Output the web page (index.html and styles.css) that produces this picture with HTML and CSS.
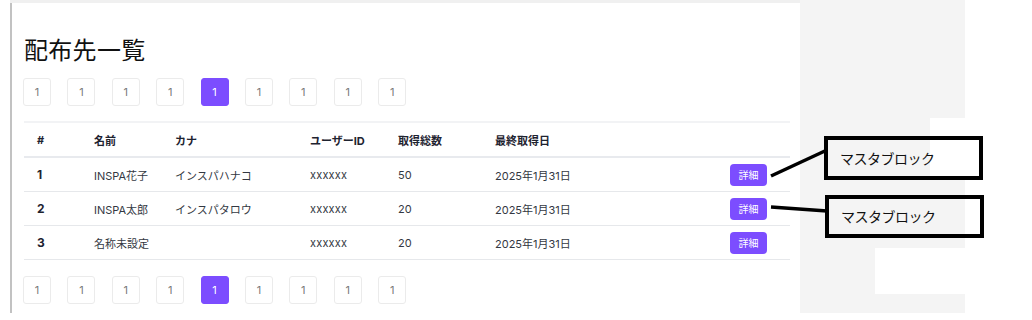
FILE: index.html
```html
<!DOCTYPE html>
<html lang="ja">
<head>
<meta charset="utf-8">
<title>配布先一覧</title>
<link rel="stylesheet" href="styles.css">
</head>
<body>
<div class="screen">
  <div class="gutter"></div>
  <main class="page">
    <h1 class="title">配布先一覧</h1>
    <nav class="pager">
      <span class="pg">1</span><span class="pg">1</span><span class="pg">1</span><span class="pg">1</span><span class="pg active">1</span><span class="pg">1</span><span class="pg">1</span><span class="pg">1</span><span class="pg">1</span>
    </nav>
    <table class="list">
      <thead>
        <tr><th class="c-no">#</th><th class="c-name">名前</th><th class="c-kana">カナ</th><th class="c-id">ユーザーID</th><th class="c-count">取得総数</th><th class="c-date">最終取得日</th><th class="c-act"></th></tr>
      </thead>
      <tbody>
        <tr><td class="c-no num">1</td><td>INSPA花子</td><td>インスパハナコ</td><td class="uid">xxxxxx</td><td>50</td><td>2025年1月31日</td><td class="c-act"><button class="btn">詳細</button></td></tr>
        <tr><td class="c-no num">2</td><td>INSPA太郎</td><td>インスパタロウ</td><td class="uid">xxxxxx</td><td>20</td><td>2025年1月31日</td><td class="c-act"><button class="btn">詳細</button></td></tr>
        <tr><td class="c-no num">3</td><td>名称未設定</td><td></td><td class="uid">xxxxxx</td><td>20</td><td>2025年1月31日</td><td class="c-act"><button class="btn">詳細</button></td></tr>
      </tbody>
    </table>
    <nav class="pager bottom">
      <span class="pg">1</span><span class="pg">1</span><span class="pg">1</span><span class="pg">1</span><span class="pg active">1</span><span class="pg">1</span><span class="pg">1</span><span class="pg">1</span><span class="pg">1</span>
    </nav>
  </main>
  <aside class="side">
    <div class="patch strip"></div>
    <div class="patch block"></div>
  </aside>
</div>

<svg class="connectors" width="1032" height="320" viewBox="0 0 1032 320">
  <line x1="771" y1="176" x2="827" y2="150" stroke="#000" stroke-width="3.5"/>
  <line x1="771" y1="207" x2="827" y2="211" stroke="#000" stroke-width="3.5"/>
</svg>
<div class="note note1">マスタブロック</div>
<div class="note note2">マスタブロック</div>
</body>
</html>
```
FILE: styles.css
```css
html, body {
  margin: 0;
  padding: 0;
  background: #ffffff;
}
body {
  width: 1032px;
  height: 320px;
  overflow: hidden;
  position: relative;
  font-family: Inter, "Noto Sans CJK JP", sans-serif;
}
.screen {
  display: flex;
  align-items: flex-start;
  height: 320px;
}
.gutter {
  width: 10px;
  flex: none;
}
.page {
  width: 777px;
  height: 310px;
  margin-top: 3px;
  padding: 0 0 0 11px;
  border-left: 2px solid #c2c2c2;
  box-shadow: 0 -3px 0 #f0f0f0;
  box-sizing: content-box;
  flex: none;
}
.title {
  margin: 30px 0 0 1px;
  font-family: "Noto Sans CJK JP", sans-serif;
  font-weight: 400;
  font-size: 24px;
  line-height: 32px;
  color: #111111;
  letter-spacing: 0.3px;
}
.pager {
  display: flex;
  gap: 16.4px;
  margin-top: 13px;
}
.pager.bottom {
  margin-top: 16px;
}
.pg {
  width: 26px;
  height: 26px;
  border: 1px solid #ebebeb;
  border-radius: 3px;
  display: flex;
  align-items: center;
  justify-content: center;
  font-size: 11px;
  color: #7a7a7a;
  flex: none;
}
.pg.active {
  background: #7c4dff;
  border-color: #7c4dff;
  color: #ffffff;
}
.list {
  width: 766px;
  margin: 15px 0 0 1px;
  table-layout: fixed;
  border-collapse: collapse;
  border-top: 2px solid #f2f3f5;
  font-size: 11px;
  color: #2b2f36;
}
.list th {
  text-align: left;
  font-weight: 700;
  color: #1e2330;
  height: 33px;
  padding: 0;
  border-bottom: 2px solid #e8eaee;
}
.list td {
  height: 33px;
  padding: 0;
  border-bottom: 1px solid #e6e8eb;
  color: #333842;
}
.c-no { width: 70px; text-indent: 13px; }
.num { font-weight: 700; color: #1e2330 !important; font-size: 12px; }
.c-name { width: 81px; }
.c-kana { width: 135px; }
.c-id { width: 88px; }
.c-count { width: 97px; }
.c-date { width: 215px; }
.c-act { width: 80px; }
.uid { letter-spacing: 0.2px; }
.btn {
  border: 0;
  border-radius: 4px;
  background: #7c4dff;
  color: #ffffff;
  font-family: "Noto Sans CJK JP", sans-serif;
  font-size: 10px;
  width: 37px;
  height: 22px;
  padding: 0;
  margin-left: 20px;
  display: block;
}
.side {
  position: relative;
  width: 165px;
  height: 313px;
  background: #f4f4f4;
  flex: none;
}
.patch {
  position: absolute;
  background: #ffffff;
}
.strip {
  left: 130px;
  top: 118px;
  width: 35px;
  height: 62px;
}
.block {
  left: 75px;
  top: 248px;
  width: 90px;
  height: 46px;
}
.connectors {
  position: absolute;
  left: 0;
  top: 0;
  pointer-events: none;
}
.note {
  position: absolute;
  border: 4px solid #000000;
  font-family: "Noto Sans CJK JP", sans-serif;
  font-size: 14px;
  padding-left: 12px;
  box-sizing: border-box;
  color: #111111;
  letter-spacing: -0.5px;
}
.note1 {
  left: 824px;
  top: 136px;
  width: 159px;
  height: 44px;
  line-height: 36px;
}
.note2 {
  left: 825px;
  top: 195px;
  width: 159px;
  height: 43px;
  line-height: 35px;
}
```
